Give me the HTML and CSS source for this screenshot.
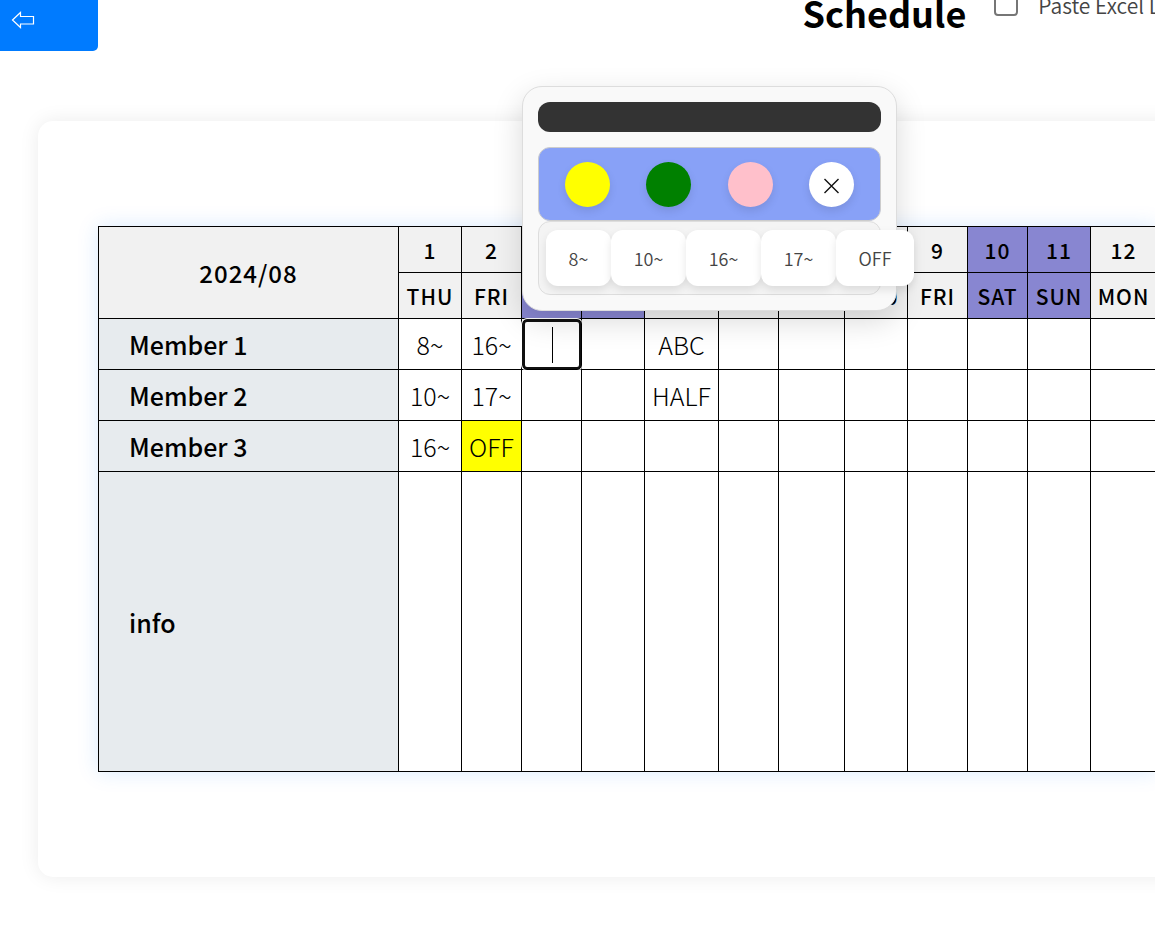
FILE: index.html
```html
<!DOCTYPE html>
<html lang="en">
<head>
    <meta charset="UTF-8">
    <meta name="viewport" content="width=device-width, initial-scale=1.0">
    <title>Schedule</title>
    <link rel="stylesheet" href="styles.css">
</head>
<body>
    <header class="header">
        <button type="button" class="back-btn" aria-label="Back">
            <svg viewBox="0 0 24 18" width="24" height="18">
                <path d="M1.500 9L9.500 1.500V5.500H22.500V13H9.500V16.500Z" fill="none" stroke="#fff" stroke-width="1.200"/>
            </svg>
        </button>
        <h1>Schedule</h1>
        <input type="checkbox" id="paste-excel" class="paste-check">
        <label for="paste-excel" class="paste-label">Paste Excel Data</label>
    </header>

    <main class="container">
        <table class="schedule">
            <colgroup>
                <col class="col-name">
                <col class="col-m"><col class="col-s"><col class="col-s"><col class="col-m">
                <col class="col-xl"><col class="col-s"><col class="col-l"><col class="col-m">
                <col class="col-s"><col class="col-s"><col class="col-m"><col class="col-l">
            </colgroup>
            <thead>
                <tr>
                    <th rowspan="2" class="month">2024/08</th>
                    <th>1</th><th>2</th><th class="weekend">3</th><th class="weekend">4</th>
                    <th>5</th><th>6</th><th>7</th><th>8</th>
                    <th>9</th><th class="weekend">10</th><th class="weekend">11</th><th>12</th>
                </tr>
                <tr>
                    <th>THU</th><th>FRI</th><th class="weekend">SAT</th><th class="weekend">SUN</th>
                    <th>MON</th><th>TUE</th><th>WED</th><th>THU</th>
                    <th>FRI</th><th class="weekend">SAT</th><th class="weekend">SUN</th><th>MON</th>
                </tr>
            </thead>
            <tbody>
                <tr>
                    <th scope="row">Member 1</th>
                    <td>8~</td><td>16~</td>
                    <td><input type="text" class="cell-input" aria-label="Member 1, day 3"></td>
                    <td></td><td>ABC</td><td></td><td></td><td></td><td></td><td></td><td></td><td></td>
                </tr>
                <tr>
                    <th scope="row">Member 2</th>
                    <td>10~</td><td>17~</td><td></td><td></td><td>HALF</td><td></td><td></td><td></td><td></td><td></td><td></td><td></td>
                </tr>
                <tr>
                    <th scope="row">Member 3</th>
                    <td>16~</td><td class="yellow">OFF</td><td></td><td></td><td></td><td></td><td></td><td></td><td></td><td></td><td></td><td></td>
                </tr>
                <tr class="info">
                    <th scope="row">info</th>
                    <td></td><td></td><td></td><td></td><td></td><td></td><td></td><td></td><td></td><td></td><td></td><td></td>
                </tr>
            </tbody>
        </table>
    </main>

    <div class="popup">
        <div class="popup-handle"></div>
        <div class="colors">
            <button type="button" class="color yellow" aria-label="Yellow"></button>
            <button type="button" class="color green" aria-label="Green"></button>
            <button type="button" class="color pink" aria-label="Pink"></button>
            <button type="button" class="color clear" aria-label="Clear">
                <svg viewBox="0 0 16 18" width="16" height="18">
                    <path d="M1.500 3L15.500 17M15.500 3L1.500 17" stroke="#111" stroke-width="1.400"/>
                </svg>
            </button>
        </div>
        <div class="shifts">
            <button type="button">8~</button>
            <button type="button">10~</button>
            <button type="button">16~</button>
            <button type="button">17~</button>
            <button type="button">OFF</button>
        </div>
    </div>
</body>
</html>
```
FILE: styles.css
```css
* {
    box-sizing: border-box;
}

body {
    min-height: 100vh;
    margin: 0;
    background-color: #fff;
    color: #000;
    font-family: "Noto Sans CJK JP", sans-serif;
    font-weight: 300;
    overflow: hidden;
}

.header {
    display: flex;
    align-items: flex-start;
    height: 51px;
    white-space: nowrap;
}

.back-btn {
    flex: none;
    width: 98px;
    height: 51px;
    padding: 0 0 12px 11px;
    border: none;
    border-radius: 0 0 5px 0;
    background-color: #007bff;
    text-align: left;
    cursor: pointer;
}

.back-btn svg {
    display: block;
}

h1 {
    margin: 0 0 0 61%;
    font-size: 36px;
    font-weight: 700;
    line-height: 24px;
}

.paste-check {
    flex: none;
    appearance: none;
    width: 24px;
    height: 24px;
    margin: -8px 20px 0 28px;
    border: 2px solid #767676;
    border-radius: 4px;
    background-color: #fff;
}

.paste-label {
    color: #444;
    font-size: 21px;
    font-weight: 350;
    line-height: 10px;
}

.container {
    width: max-content;
    margin: 70px 0 57px 38px;
    padding: 105px 60px;
    border-radius: 15px;
    background-color: #fff;
    box-shadow: 0 0 20px rgba(0, 0, 0, 0.08);
}

.schedule {
    width: 1058px;
    table-layout: fixed;
    border-collapse: collapse;
    box-shadow: 0 0 20px rgba(0, 123, 255, 0.15);
}

.col-name { width: 300px; }
.col-s { width: 60px; }
.col-m { width: 63px; }
.col-l { width: 66px; }
.col-xl { width: 74px; }

.schedule th,
.schedule td {
    height: 51px;
    padding: 0;
    border: 1px solid #000;
    background-color: #fff;
    font-size: 25px;
    line-height: 36px;
    text-align: center;
}

.schedule thead th {
    height: 46px;
    background-color: #f1f1f1;
    font-size: 21px;
    font-weight: 500;
    line-height: 32px;
    letter-spacing: 1px;
}

.schedule thead .month {
    font-size: 24px;
}

.schedule thead .weekend {
    background-color: #8886d1;
}

.schedule tbody th {
    padding-left: 30px;
    background-color: #e7ebee;
    font-weight: 500;
    text-align: left;
}

.schedule .info td,
.schedule .info th {
    height: 300px;
}

.schedule td.yellow {
    background-color: #ff0;
}

.cell-input {
    display: block;
    width: calc(100% + 1px);
    height: 51px;
    margin-bottom: -1px;
    padding: 0;
    border: 3px solid #101010;
    border-radius: 5px;
    outline: 1px solid #fff;
    /* text cursor */
    background: linear-gradient(#000, #000) center / 1px 36px no-repeat #fff;
    font: inherit;
    text-align: center;
}

.popup {
    position: absolute;
    top: 86px;
    left: 522px;
    width: 375px;
    padding: 15px;
    border: 1px solid #ddd;
    border-radius: 20px;
    background-color: #f9f9f9;
    box-shadow: 0 10px 30px rgba(0, 0, 0, 0.15);
}

.popup-handle {
    height: 30px;
    margin-bottom: 15px;
    border-radius: 12px;
    background-color: #333;
    cursor: move;
}

.colors {
    display: flex;
    justify-content: space-around;
    padding: 14px 8px 13px;
    border: 1px solid #ccc;
    border-radius: 12px;
    background-color: #88a1f7;
}

.color {
    width: 45px;
    height: 45px;
    padding: 0;
    border: none;
    border-radius: 50%;
    box-shadow: 0 4px 8px rgba(0, 0, 0, 0.1);
    cursor: pointer;
}

.color.yellow { background-color: #ff0; }
.color.green { background-color: green; }
.color.pink { background-color: pink; }

.color.clear {
    display: flex;
    align-items: center;
    justify-content: center;
    background-color: #fff;
}

.shifts {
    display: flex;
    padding: 8px 7px;
    border: 1px solid #ddd;
    border-radius: 12px;
    background-color: #f4f4f4;
}

.shifts button {
    flex: none;
    width: 75px;
    height: 56px;
    padding: 0;
    border: none;
    border-radius: 12px;
    background-color: #fff;
    box-shadow: 0 4px 8px rgba(0, 0, 0, 0.1);
    color: #444;
    font-family: inherit;
    font-size: 18px;
    font-weight: 350;
    cursor: pointer;
}

.shifts button:first-child {
    width: 65px;
}

.shifts button:last-child {
    width: 78px;
}
```
